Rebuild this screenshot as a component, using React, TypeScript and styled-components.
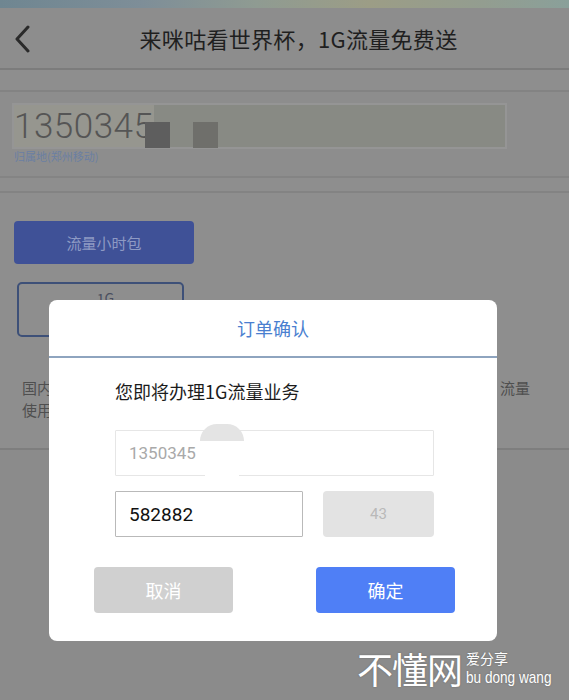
import React from "react";
import styled, { createGlobalStyle } from "styled-components";

const GlobalStyle = createGlobalStyle`
  html, body { margin: 0; padding: 0; }
  body {
    background: #8b8b8b;
    font-family: "Noto Sans CJK SC", "Noto Sans", Roboto, sans-serif;
  }
  * { box-sizing: border-box; }
`;

const Page = styled.div`
  position: relative;
  width: 569px;
  height: 700px;
  overflow: hidden;
  background: #8b8b8b;
  display: flex;
  flex-direction: column;
`;

const StatusStrip = styled.div`
  height: 8px;
  background: linear-gradient(90deg, #6f8691 0%, #7e8e98 25%, #8f9b92 45%, #9c9d86 65%, #939d90 85%, #8aa09a 100%);
`;

const Header = styled.header`
  height: 62px;
  display: flex;
  align-items: center;
  justify-content: center;
  position: relative;
  background: #8d8d8d;
  border-bottom: 2px solid #7c7c7c;
`;

const BackIcon = styled.svg`
  position: absolute;
  left: 13px;
  top: 17px;
`;

const Title = styled.h1`
  margin: 0 0 0 28px;
  font-size: 22px;
  font-weight: 400;
  color: #1f1f1f;
  letter-spacing: 0.3px;
`;

const Band = styled.div<{ $h: number }>`
  height: ${(p) => p.$h}px;
  background: #8e8e8e;
  border-bottom: 2px solid #838383;
`;

const PhoneSection = styled.section`
  height: 86px;
  padding: 13px 14px 0;
  background: #8d8d8d;
  border-bottom: 2px solid #848484;
  position: relative;
`;

const PhoneBox = styled.div`
  width: 491px;
  height: 42px;
  background: linear-gradient(90deg, #96968f 0, #96968f 140px, #888a84 140px);
  box-shadow: 0 0 0 2px #959595;
  display: flex;
  align-items: center;
  position: relative;
`;

const PhoneNumber = styled.span`
  font-family: Roboto, "Liberation Sans", sans-serif;
  font-weight: 300;
  font-size: 35px;
  color: #555;
  letter-spacing: 0.5px;
  line-height: 1;
`;

const Redact = styled.div<{ $l: number; $c: string }>`
  position: absolute;
  left: ${(p) => p.$l}px;
  top: 17px;
  width: 25px;
  height: 26px;
  background: ${(p) => p.$c};
`;

const Location = styled.div`
  margin-top: 1px;
  font-size: 11px;
  color: #6a7fa3;
`;

const Content = styled.section`
  height: 257px;
  padding: 28px 14px 0;
  border-bottom: 2px solid #7e7e7e;
  background: #8e8e8e;
  display: flex;
  flex-direction: column;
  align-items: flex-start;
`;

const PackButton = styled.div`
  width: 180px;
  height: 43px;
  border-radius: 4px;
  background: #3f5197;
  color: #8e9ac4;
  font-size: 15px;
  display: flex;
  align-items: center;
  justify-content: center;
`;

const OptionBox = styled.div`
  margin: 18px 0 0 3px;
  width: 167px;
  height: 55px;
  border: 2px solid #3d5078;
  border-radius: 5px;
  display: flex;
  justify-content: center;
  padding-top: 4px;
  padding-left: 10px;
  color: #4a4f60;
  font-size: 14px;
`;

const DescRow = styled.div`
  margin-top: 40px;
  width: 100%;
  display: flex;
  justify-content: space-between;
  padding: 0 25px 0 8px;
  font-size: 15px;
  line-height: 22px;
  color: #4f4f4f;
`;

const Rest = styled.div`
  flex: 1;
  background: #8b8b8b;
`;

const Dialog = styled.div`
  position: absolute;
  left: 49px;
  top: 300px;
  width: 448px;
  height: 341px;
  background: #fff;
  border-radius: 8px;
  display: flex;
  flex-direction: column;
`;

const DialogTitle = styled.div`
  height: 58px;
  border-bottom: 2px solid #8ea4bf;
  display: flex;
  align-items: center;
  justify-content: center;
  font-size: 18px;
  color: #4a7fd0;
`;

const DialogBody = styled.div`
  padding: 21px 63px 0 66px;
  display: flex;
  flex-direction: column;
  position: relative;
`;

const Lead = styled.div`
  font-size: 18px;
  color: #1c1c1c;
  line-height: 24px;
`;

const Field = styled.div<{ $w: number; $muted?: boolean }>`
  width: ${(p) => p.$w}px;
  height: 46px;
  border: 1px solid ${(p) => (p.$muted ? "#e6e6e6" : "#b9b9b9")};
  border-radius: 1px;
  display: flex;
  align-items: center;
  padding-left: 13px;
  font-family: Roboto, "Liberation Sans", sans-serif;
  font-size: ${(p) => (p.$muted ? 17 : 19)}px;
  color: ${(p) => (p.$muted ? "#a9a9a9" : "#111")};
`;

const CodeRow = styled.div`
  margin-top: 15px;
  display: flex;
  justify-content: space-between;
  width: 319px;
`;

const CodeButton = styled.div`
  width: 111px;
  height: 46px;
  border-radius: 4px;
  background: #e3e3e3;
  color: #b9b9b9;
  font-family: Roboto, "Liberation Sans", sans-serif;
  font-size: 15px;
  display: flex;
  align-items: center;
  justify-content: center;
`;

const Blob = styled.div`
  position: absolute;
  left: 151px;
  top: 66px;
  width: 44px;
  height: 17px;
  border-radius: 22px 22px 0 0;
  background: #e4e4e4;
`;

const BlobGap = styled.div`
  position: absolute;
  left: 156px;
  top: 83px;
  width: 34px;
  height: 36px;
  background: #fff;
`;

const Actions = styled.div`
  margin-top: 30px;
  padding: 0 42px 0 45px;
  display: flex;
  justify-content: space-between;
`;

const ActionButton = styled.div<{ $primary?: boolean }>`
  width: 139px;
  height: 46px;
  border-radius: 4px;
  background: ${(p) => (p.$primary ? "#4f7ff6" : "#d0d0d0")};
  color: #fff;
  font-size: 18px;
  display: flex;
  align-items: center;
  justify-content: center;
`;

const Watermark = styled.div`
  position: absolute;
  left: 357px;
  top: 646px;
  width: 212px;
  display: flex;
  align-items: flex-end;
  gap: 4px;
  color: #fff;
  white-space: nowrap;
  text-shadow: 0 0 2px rgba(0, 0, 0, 0.25);
`;

const WmMain = styled.div`
  flex-shrink: 0;
  font-size: 36px;
  line-height: 44px;
  letter-spacing: -1px;
`;

const WmSide = styled.div`
  flex-shrink: 0;
  width: 96px;
  display: flex;
  flex-direction: column;
  gap: 2px;
  padding-bottom: 2px;
`;

const WmSmall = styled.div`
  font-size: 14px;
  line-height: 16px;
`;

const WmPinyin = styled.div`
  font-family: "Liberation Sans", sans-serif;
  font-size: 17px;
  line-height: 20px;
  transform: scaleX(0.8);
  transform-origin: left center;
`;

export default function App() {
  return (
    <>
      <GlobalStyle />
      <Page>
        <StatusStrip />
        <Header>
          <BackIcon width="20" height="28" viewBox="0 0 20 28">
            <path d="M15 2 L4 14 L15 26" fill="none" stroke="#2a2a2a" strokeWidth="3" strokeLinecap="round" strokeLinejoin="round" />
          </BackIcon>
          <Title>来咪咕看世界杯，1G流量免费送</Title>
        </Header>
        <Band $h={22} />
        <PhoneSection>
          <PhoneBox>
            <PhoneNumber>1350345</PhoneNumber>
            <Redact $l={131} $c="#5e5e5e" />
            <Redact $l={179} $c="#6f6f6b" />
          </PhoneBox>
          <Location>归属地(郑州移动)</Location>
        </PhoneSection>
        <Band $h={15} />
        <Content>
          <PackButton>流量小时包</PackButton>
          <OptionBox>1G</OptionBox>
          <DescRow>
            <span>国内<br />使用</span>
            <span>流量</span>
          </DescRow>
        </Content>
        <Rest />

        <Dialog>
          <DialogTitle>订单确认</DialogTitle>
          <DialogBody>
            <Lead>您即将办理1G流量业务</Lead>
            <Field $w={319} $muted style={{ marginTop: 27 }}>1350345</Field>
            <CodeRow>
              <Field $w={188}>582882</Field>
              <CodeButton>43</CodeButton>
            </CodeRow>
            <BlobGap />
            <Blob />
          </DialogBody>
          <Actions>
            <ActionButton>取消</ActionButton>
            <ActionButton $primary>确定</ActionButton>
          </Actions>
        </Dialog>

        <Watermark>
          <WmMain>不懂网</WmMain>
          <WmSide>
            <WmSmall>爱分享</WmSmall>
            <WmPinyin>bu dong wang</WmPinyin>
          </WmSide>
        </Watermark>
      </Page>
    </>
  );
}
